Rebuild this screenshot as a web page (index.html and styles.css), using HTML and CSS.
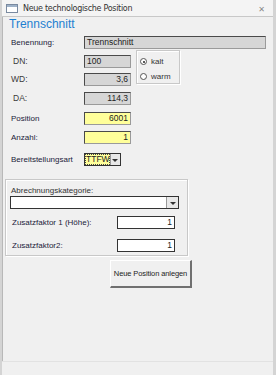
FILE: index.html
```html
<html>
	<head>
		<title>Neue technologische Position</title>
		<link rel="stylesheet" href="styles.css">
	</head>
	<body>
		<div id="window">
			<div id="titlebar">
				<span class="app-icon"></span>
				<span class="title">Neue technologische Position</span>
				<span class="close">&#x2715;</span>
			</div>
			<div id="content">
				<div id="heading">Trennschnitt</div>

				<div class="row first">
					<label class="lbl strong">Benennung:</label>
					<div class="field grey wide">Trennschnitt</div>
				</div>

				<div id="dims">
					<div class="dims-left">
						<div class="row">
							<label class="lbl light indent">DN:</label>
							<div class="field grey short left">100</div>
						</div>
						<div class="row">
							<label class="lbl light">WD:</label>
							<div class="field grey short">3,6</div>
						</div>
					</div>
					<div class="radio-box">
						<div class="radio"><span class="dot checked"></span>kalt</div>
						<div class="radio"><span class="dot"></span>warm</div>
					</div>
				</div>

				<div class="row mid">
					<label class="lbl light indent">DA:</label>
					<div class="field grey short">114,3</div>
				</div>
				<div class="row mid">
					<label class="lbl strong">Position</label>
					<div class="field yellow short">6001</div>
				</div>
				<div class="row">
					<label class="lbl strong">Anzahl:</label>
					<div class="field yellow short">1</div>
				</div>
				<div class="row tall">
					<label class="lbl strong">Bereitstellungsart</label>
					<div class="combo small">
						<span class="combo-text">TTFW</span>
						<span class="drop"><span class="arrow"></span></span>
					</div>
				</div>

				<div id="billing">
					<div class="cap">Abrechnungskategorie:</div>
					<div class="combo full">
						<span class="combo-text"></span>
						<span class="drop"><span class="arrow"></span></span>
					</div>
					<div class="row factor">
						<label class="lbl strong wide-lbl">Zusatzfaktor 1 (Höhe):</label>
						<div class="field white">1</div>
					</div>
					<div class="row factor">
						<label class="lbl strong wide-lbl">Zusatzfaktor2:</label>
						<div class="field white">1</div>
					</div>
				</div>

				<div class="actions">
					<button class="btn">Neue Position anlegen</button>
				</div>
			</div>
			<div id="footer"></div>
		</div>
	</body>
</html>
```

FILE: styles.css
```css
body
{
	margin: 0;
	background-color: #f0f0f0;
	font-family: "Liberation Sans", Arial, sans-serif;
	font-size: 8px;
	color: #222;
}

#window
{
	width: 276px;
	height: 375px;
	box-sizing: border-box;
	border-left: 2px solid #d4d4d4;
	border-right: 3px solid #d4d4d4;
	display: flex;
	flex-direction: column;
}

#titlebar
{
	height: 16px;
	border-bottom: 1px solid #c8c8c8;
	background-color: #f4f4f4;
	display: flex;
	align-items: center;
	padding-left: 4px;
	font-family: "DejaVu Sans", sans-serif;
	font-size: 8px;
	color: #333;
}

.app-icon
{
	width: 10px;
	height: 7px;
	border: 1px solid #7a8aa0;
	background: linear-gradient(#9fb2c8 0 2px, #fff 2px);
	margin-right: 5px;
}

.title
{
	flex: 1;
	letter-spacing: -0.3px;
}

.close
{
	color: #888;
	font-size: 8px;
	margin-right: 8px;
	margin-top: 3px;
}

#content
{
	flex: 1;
	border-left: 1px solid #b8b8b8;
	padding-left: 6px;
}

#heading
{
	font-size: 12px;
	color: #1d7fd0;
	height: 14px;
	line-height: 14px;
	margin-bottom: 1px;
}

.row
{
	display: flex;
	align-items: center;
	height: 18px;
}

.row.first
{
	height: 20px;
}

.row.mid
{
	height: 20px;
}

.row.tall
{
	height: 26px;
}

.lbl
{
	width: 73px;
	flex: none;
	padding-left: 2px;
}

.lbl.indent
{
	padding-left: 4px;
	width: 71px;
}

.strong
{
	color: #1b1b3a;
	font-size: 8px;
}

.light
{
	color: #3a3a3a;
	font-size: 8.5px;
}

.field
{
	height: 13px;
	box-sizing: border-box;
	border: 1px solid #4a4a4a;
	border-right-color: #9a9a9a;
	border-bottom-color: #9a9a9a;
	line-height: 11px;
	padding: 0 2px;
	text-align: right;
	font-size: 8.5px;
	color: #222;
}

.grey
{
	background-color: #d6d6d6;
}

.wide
{
	width: 182px;
	text-align: left;
}

.short
{
	width: 47px;
}

.left
{
	text-align: left;
}

.yellow
{
	background-color: #ffff9a;
	width: 47px;
}

.white
{
	background-color: #fff;
	width: 58px;
	border-color: #333;
}

#dims
{
	display: flex;
	align-items: flex-start;
}

.radio-box
{
	width: 44px;
	height: 34px;
	box-sizing: border-box;
	border: 1px solid #c8c8c8;
	box-shadow: 1px 1px 0 #fff, inset 1px 1px 0 #fff;
	margin-left: 5px;
	margin-top: -2px;
	padding: 3px 0 0 3px;
}

.radio
{
	display: flex;
	align-items: center;
	height: 15px;
	font-size: 8px;
	color: #333;
}

.dot
{
	width: 7px;
	height: 7px;
	box-sizing: border-box;
	border: 1px solid #555;
	border-radius: 50%;
	background: #fff;
	margin-right: 4px;
	position: relative;
}

.dot.checked::after
{
	content: "";
	position: absolute;
	left: 1.5px;
	top: 1.5px;
	width: 2px;
	height: 2px;
	border-radius: 50%;
	background: #222;
}

.combo
{
	display: flex;
	height: 13px;
	box-sizing: border-box;
	border: 1px solid #333;
}

.combo.small
{
	width: 37px;
}

.combo.small .combo-text
{
	background-color: #ffff9a;
	color: #222;
	font-size: 8.5px;
	line-height: 11px;
	padding-left: 1px;
	flex: 1;
	outline: 1px dotted #444;
	outline-offset: -1px;
}

.combo.full
{
	width: 169px;
	background: #fff;
	margin-bottom: 7px;
}

.combo.full .combo-text
{
	flex: 1;
}

.drop
{
	width: 11px;
	border-left: 1px solid #999;
	background: #e8e8e8;
	display: flex;
	align-items: center;
	justify-content: center;
}

.arrow
{
	width: 0;
	height: 0;
	border-left: 3px solid transparent;
	border-right: 3px solid transparent;
	border-top: 3px solid #333;
	margin-top: 2px;
}

#billing
{
	margin-top: 7px;
	margin-left: -4px;
	width: 183px;
	height: 77px;
	box-sizing: border-box;
	border: 1px solid #c8c8c8;
	box-shadow: 1px 1px 0 #fff, inset 1px 1px 0 #fff;
	padding: 6px 0 0 4px;
}

.cap
{
	color: #333;
	font-size: 8px;
	height: 10px;
	line-height: 10px;
	padding-left: 1px;
}

.row.factor
{
	height: 23px;
	align-items: flex-start;
}

.row.factor .lbl
{
	padding-top: 2px;
}

.wide-lbl
{
	width: 105px;
}

.actions
{
	display: flex;
	padding-left: 101px;
	margin-top: 4px;
}

.btn
{
	width: 82px;
	height: 28px;
	background: #f0f0f0;
	border: 1px solid #fff;
	border-right: 2px solid #707070;
	border-bottom: 2px solid #707070;
	font-family: "Liberation Sans", Arial, sans-serif;
	font-size: 7.5px;
	white-space: nowrap;
	letter-spacing: -0.1px;
	color: #222;
	padding: 0;
}

#footer
{
	height: 13px;
	border-top: 1px solid #e2e2e2;
}
```
